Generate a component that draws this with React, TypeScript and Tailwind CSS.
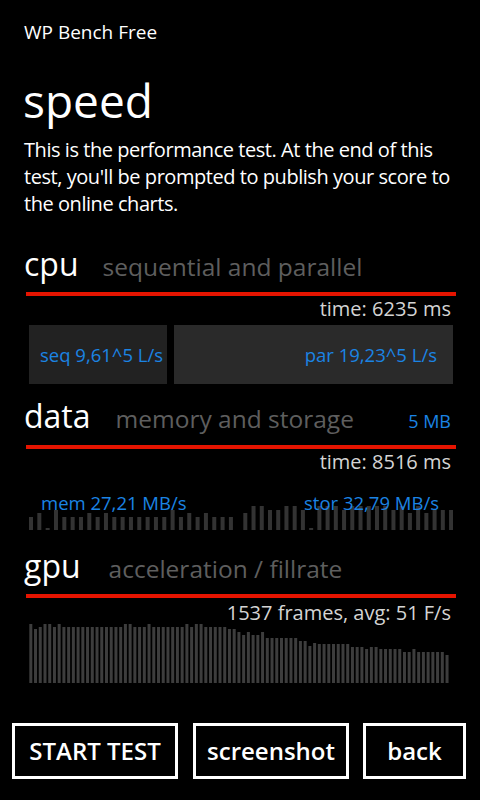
import React from 'react'

const FONT = { fontFamily: '"Open Sans", "Noto Sans", sans-serif' }

// bar heights read off the screen, in px
const dataBars = [
  13, 17, 2, 20, 13, 13, 13, 17, 13, 17, 13, 13, 13, 13, 13, 13, 13, 20, 13, 17, 13, 17, 13, 13, 13,
  17, 24, 24, 20, 20, 24, 24, 20, 2, 24, 24, 24, 20, 24, 24, 24, 24, 24, 20, 24, 17, 24, 17, 20, 20, 20,
]

function rep(v: number, n: number) {
  return Array.from({ length: n }, () => v)
}

const gpuBars: number[] = [
  59, 54, 56, 59, 59, 56, 59, ...rep(56, 13), 59, 59, ...rep(56, 3), 59, ...rep(56, 7),
  59, 56, 59, 59, ...rep(56, 5), 54, 54, 51, 48, 51, 48, 48, 51, ...rep(45, 7),
  42, 42, 37, 40, ...rep(39, 7), ...rep(36, 3), 34, 36, 36, ...rep(34, 5), 31, 31, 34, ...rep(31, 6), 28,
]

function SectionHead({ title, sub, right, gap }: { title: string; sub: string; right?: string; gap: string }) {
  return (
    <div className="flex items-baseline h-[40px] pl-[24px] pr-[29px]">
      <span className="text-[32px] leading-[40px] text-white">{title}</span>
      <span className={`${gap} text-[24.5px] text-[#5e5e5e]`}>{sub}</span>
      {right && <span className="ml-auto text-[18px] text-[#1b84e4]">{right}</span>}
    </div>
  )
}

function RedLine() {
  return <div className="ml-[26px] w-[430px] h-[4px] bg-[#e51400]" />
}

function Stat({ children, className = '' }: { children: React.ReactNode; className?: string }) {
  return (
    <div className={`pr-[29px] text-right text-[20px] leading-[24px] text-[#d4d4d4] ${className}`}>
      {children}
    </div>
  )
}

function DataChart() {
  return (
    <svg width="424" height="39" viewBox="0 0 424 39" className="col-start-1 row-start-1">
      {dataBars.map((h, i) => {
        const x = i < 25 ? i * 8.33 : 214.3 + (i - 25) * 8.23
        return <rect key={i} x={x} y={39 - h} width={4} height={h} fill="#333333" />
      })}
    </svg>
  )
}

function GpuChart() {
  return (
    <svg width="424" height="59" viewBox="0 0 424 59">
      {gpuBars.map((h, i) => (
        <rect key={i} x={0.3 + i * 4.73} y={59 - h} width={3} height={h} fill="#3d3d3d" />
      ))}
    </svg>
  )
}

export default function App() {
  return (
    <div className="w-[480px] h-[800px] bg-black text-white flex flex-col overflow-hidden" style={FONT}>
      <div className="pl-[24px] pt-[20px] text-[19px] leading-[24px]">WP Bench Free</div>
      <div className="pl-[23px] mt-[33px] text-[46px] leading-[46px]">speed</div>
      <p className="pl-[24px] pr-[20px] mt-[13px] text-[20px] leading-[27px] tracking-[-0.45px]">
        This is the performance test. At the end of this test, you'll be prompted to publish your score to the
        online charts.
      </p>

      {/* cpu */}
      <div className="mt-[27px]">
        <SectionHead title="cpu" sub="sequential and parallel" gap="ml-[24px]" />
      </div>
      <div className="mt-[8px]">
        <RedLine />
      </div>
      <Stat className="mt-[1px]">time: 6235 ms</Stat>
      <div className="mt-[4px] ml-[29px] w-[424px] h-[59px] flex gap-[7px] text-[18.5px] text-[#1b84e4]">
        <div className="w-[138px] bg-[#222222] flex items-center pl-[11px]">seq 9,61^5 L/s</div>
        <div className="flex-1 bg-[#2a2a2a] flex items-center justify-end pr-[16px]">par 19,23^5 L/s</div>
      </div>

      {/* data */}
      <div className="mt-[12px]">
        <SectionHead title="data" sub="memory and storage" right="5 MB" gap="ml-[25px]" />
      </div>
      <div className="mt-[9px]">
        <RedLine />
      </div>
      <Stat className="mt-[1px]">time: 8516 ms</Stat>
      <div className="mt-[17px] ml-[29px] w-[424px] grid">
        <DataChart />
        <div className="col-start-1 row-start-1 flex justify-between pl-[12px] pr-[14px] text-[18.5px] leading-[24px] text-[#1b84e4]">
          <span>mem 27,21 MB/s</span>
          <span>stor 32,79 MB/s</span>
        </div>
      </div>

      {/* gpu */}
      <div className="mt-[16px]">
        <SectionHead title="gpu" sub="acceleration / fillrate" gap="ml-[28px]" />
      </div>
      <div className="mt-[8px]">
        <RedLine />
      </div>
      <Stat className="mt-[3px] leading-[22px]">1537 frames, avg: 51 F/s</Stat>
      <div className="ml-[29px] -mt-[1px]">
        <GpuChart />
      </div>

      {/* buttons */}
      <div className="mt-[40px] ml-[12px] flex text-[24px] font-semibold">
        <button className="w-[166px] h-[56px] border-[3px] border-white">START TEST</button>
        <button className="ml-[15px] w-[156px] h-[56px] border-[3px] border-white">screenshot</button>
        <button className="ml-[14px] w-[103px] h-[56px] border-[3px] border-white">back</button>
      </div>
    </div>
  )
}
